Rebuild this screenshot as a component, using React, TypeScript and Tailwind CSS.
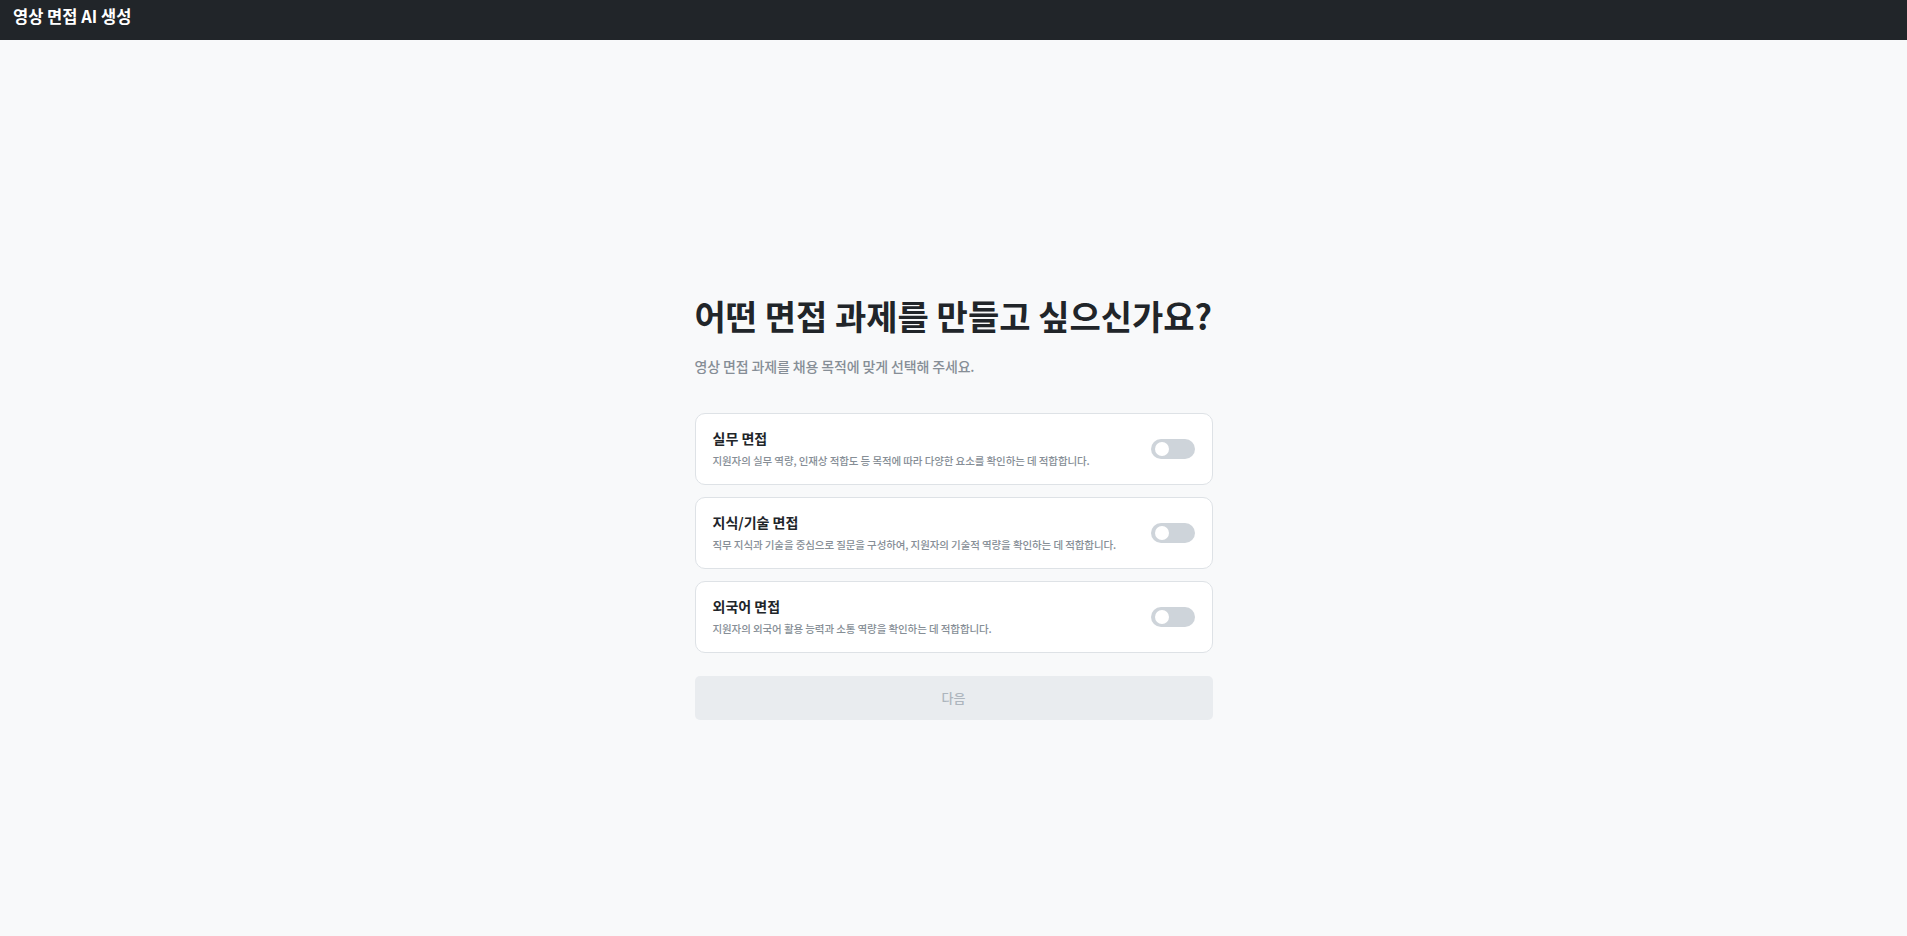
import React, { useState } from "react";

const options = [
  {
    id: "practical",
    title: "실무 면접",
    desc: "지원자의 실무 역량, 인재상 적합도 등 목적에 따라 다양한 요소를 확인하는 데 적합합니다.",
  },
  {
    id: "knowledge",
    title: "지식/기술 면접",
    desc: "직무 지식과 기술을 중심으로 질문을 구성하여, 지원자의 기술적 역량을 확인하는 데 적합합니다.",
  },
  {
    id: "language",
    title: "외국어 면접",
    desc: "지원자의 외국어 활용 능력과 소통 역량을 확인하는 데 적합합니다.",
  },
];

function Toggle({ on, onClick }: { on: boolean; onClick: () => void }) {
  return (
    <button
      type="button"
      onClick={onClick}
      className={`flex h-[20px] w-[44px] shrink-0 items-center rounded-full ${
        on ? "bg-[#4c6ef5]" : "bg-[#ced4da]"
      }`}
    >
      <span
        className={`block h-[14px] w-[14px] rounded-full bg-white ${
          on ? "ml-[26px]" : "ml-[4px]"
        }`}
      />
    </button>
  );
}

export default function App() {
  const [selected, setSelected] = useState<string[]>([]);

  const toggle = (id: string) => {
    setSelected((s) => (s.includes(id) ? s.filter((x) => x !== id) : [...s, id]));
  };

  return (
    <div
      className="min-h-screen bg-[#f8f9fa]"
      style={{ fontFamily: '"Noto Sans CJK KR", "Noto Sans", sans-serif' }}
    >
      <header className="h-10 bg-[#212529] pl-[13px] pt-[6px]">
        <h1 className="text-[16.5px] font-bold leading-[20px] text-white">
          영상 면접 AI 생성
        </h1>
      </header>

      <main className="flex justify-center pt-[255px]">
        <div className="w-[518px]">
          <h2 className="text-[34px] font-bold leading-[42px] text-[#212529]">
            어떤 면접 과제를 만들고 싶으신가요?
          </h2>
          <p className="mt-[19px] text-[14px] font-medium leading-[20px] tracking-[-0.01em] text-[#868e96]">
            영상 면접 과제를 채용 목적에 맞게 선택해 주세요.
          </p>

          <div className="mt-[37px] flex flex-col gap-[12px]">
            {options.map((o) => (
              <div
                key={o.id}
                className="flex items-center justify-between rounded-[10px] border border-[#dee2e6] bg-white px-[17px] py-4"
              >
                <div>
                  <div className="text-[14px] font-bold leading-[17px] text-[#212529]">
                    {o.title}
                  </div>
                  <div className="mt-[6px] text-[10.5px] font-medium leading-[15px] tracking-[-0.01em] text-[#868e96]">
                    {o.desc}
                  </div>
                </div>
                <Toggle on={selected.includes(o.id)} onClick={() => toggle(o.id)} />
              </div>
            ))}
          </div>

          <button
            type="button"
            disabled={selected.length === 0}
            className="mt-[23px] flex h-[44px] w-full items-center justify-center rounded-[5px] bg-[#e9ecef] text-[13px] font-medium text-[#adb5bd]"
          >
            다음
          </button>
        </div>
      </main>
    </div>
  );
}
